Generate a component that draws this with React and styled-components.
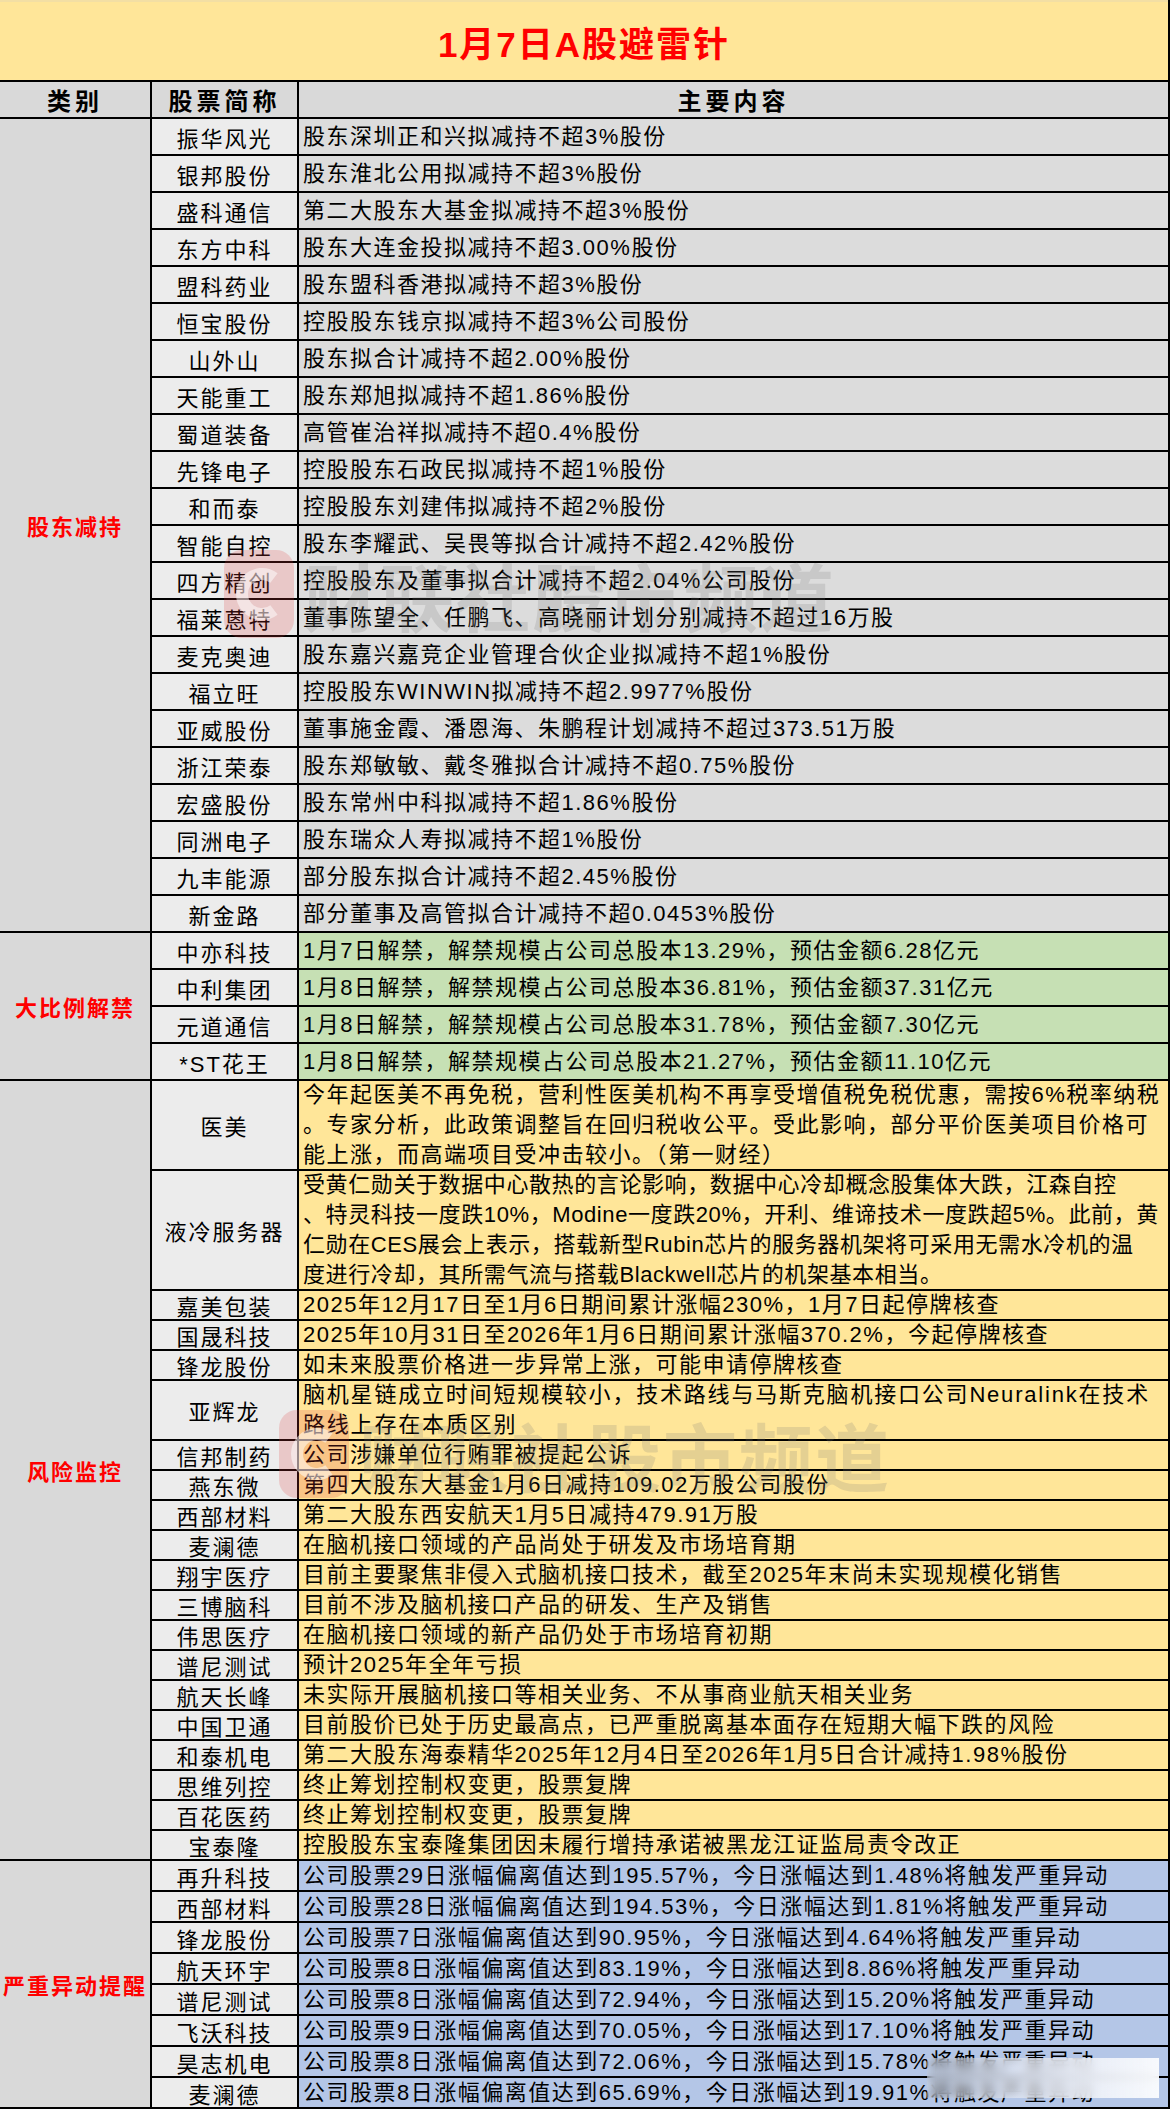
import styled, { createGlobalStyle } from "styled-components";

const GlobalStyle = createGlobalStyle`
  * { box-sizing: border-box; }
  body {
    margin: 0;
    background: #ffffff;
  }
`;

const LINE = "2px solid #000";
const FONT = `"Liberation Sans Narrow", "Liberation Sans", "Noto Sans CJK SC", sans-serif`;

const Sheet = styled.div`
  position: relative;
  width: 1170px;
  border-right: ${LINE};
  font-family: ${FONT};
  color: #000;
  overflow: hidden;
`;

const TitleBar = styled.div`
  height: 82px;
  background: #ffe699;
  border-top: 2px solid #f3dfa4;
  border-bottom: ${LINE};
  display: flex;
  align-items: center;
  justify-content: center;
  color: #ff0000;
  font-size: 35px;
  font-weight: 700;
  letter-spacing: 2px;
`;

const HeaderRow = styled.div`
  display: flex;
  height: 37px;
  background: #d9d9d9;
  border-bottom: ${LINE};
`;

const HeaderCell = styled.div`
  width: ${(p) => (p.$w ? `${p.$w}px` : "auto")};
  flex: ${(p) => (p.$w ? "none" : "1")};
  border-right: ${(p) => (p.$w ? LINE : "none")};
  display: flex;
  align-items: center;
  justify-content: center;
  font-size: 24px;
  font-weight: 700;
  letter-spacing: 4px;
`;

const Section = styled.div`
  display: flex;
`;

const Category = styled.div`
  width: 152px;
  flex: none;
  background: #d9d9d9;
  border-right: ${LINE};
  border-bottom: ${LINE};
  display: flex;
  align-items: center;
  justify-content: center;
  color: #ff0000;
  font-size: 22px;
  font-weight: 700;
  letter-spacing: 2px;
  white-space: nowrap;
`;

const Rows = styled.div`
  flex: 1;
  display: flex;
  flex-direction: column;
`;

const Row = styled.div`
  display: flex;
  height: ${(p) => p.$h}px;
  border-bottom: ${LINE};
`;

const Name = styled.div`
  width: 147px;
  flex: none;
  background: #ececec;
  border-right: ${LINE};
  display: flex;
  align-items: center;
  justify-content: center;
  font-size: 22px;
  letter-spacing: 2px;
  white-space: nowrap;
`;

const Content = styled.div`
  flex: 1;
  min-width: 0;
  background: ${(p) => p.$tone};
  padding-left: 4px;
  display: flex;
  flex-direction: column;
  justify-content: center;
  font-size: 22px;
  letter-spacing: ${(p) => p.$spacing}px;
  line-height: ${(p) => p.$lh}px;
  white-space: nowrap;
  overflow: hidden;
`;

const Watermark = styled.div`
  position: absolute;
  left: ${(p) => p.$x}px;
  top: ${(p) => p.$y}px;
  display: flex;
  align-items: center;
  gap: 8px;
  pointer-events: none;
  color: rgba(120, 120, 120, 0.2);
  font-family: "Noto Sans CJK SC", sans-serif;
  font-size: 74px;
  font-weight: 700;
  letter-spacing: 2px;
  white-space: nowrap;
`;

const Smudge = styled.div`
  position: absolute;
  left: 927px;
  top: 2058px;
  width: 232px;
  height: 40px;
  background: linear-gradient(
    to right,
    rgba(255, 255, 255, 0.25),
    rgba(240, 242, 248, 0.8) 60%,
    rgba(255, 255, 255, 0.9)
  );
  backdrop-filter: blur(4px);
`;

const Logo = () => (
  <svg width="74" height="92" viewBox="0 0 74 92">
    <rect x="2" y="2" width="70" height="88" rx="18" fill="rgba(225,60,60,0.2)" />
    <path
      d="M52 30 A20 20 0 1 0 52 62"
      fill="none"
      stroke="rgba(255,255,255,0.5)"
      strokeWidth="12"
    />
  </svg>
);

const GRAY = "#dcdcdc";
const GREEN = "#c6e0b4";
const YELLOW = "#ffe699";
const BLUE = "#b4c6e7";

const sections = [
  {
    title: "股东减持",
    tone: GRAY,
    rowH: 37,
    rows: [
      ["振华风光", ["股东深圳正和兴拟减持不超3%股份"]],
      ["银邦股份", ["股东淮北公用拟减持不超3%股份"]],
      ["盛科通信", ["第二大股东大基金拟减持不超3%股份"]],
      ["东方中科", ["股东大连金投拟减持不超3.00%股份"]],
      ["盟科药业", ["股东盟科香港拟减持不超3%股份"]],
      ["恒宝股份", ["控股股东钱京拟减持不超3%公司股份"]],
      ["山外山", ["股东拟合计减持不超2.00%股份"]],
      ["天能重工", ["股东郑旭拟减持不超1.86%股份"]],
      ["蜀道装备", ["高管崔治祥拟减持不超0.4%股份"]],
      ["先锋电子", ["控股股东石政民拟减持不超1%股份"]],
      ["和而泰", ["控股股东刘建伟拟减持不超2%股份"]],
      ["智能自控", ["股东李耀武、吴畏等拟合计减持不超2.42%股份"]],
      ["四方精创", ["控股股东及董事拟合计减持不超2.04%公司股份"]],
      ["福莱蒽特", ["董事陈望全、任鹏飞、高晓丽计划分别减持不超过16万股"]],
      ["麦克奥迪", ["股东嘉兴嘉竞企业管理合伙企业拟减持不超1%股份"]],
      ["福立旺", ["控股股东WINWIN拟减持不超2.9977%股份"]],
      ["亚威股份", ["董事施金霞、潘恩海、朱鹏程计划减持不超过373.51万股"]],
      ["浙江荣泰", ["股东郑敏敏、戴冬雅拟合计减持不超0.75%股份"]],
      ["宏盛股份", ["股东常州中科拟减持不超1.86%股份"]],
      ["同洲电子", ["股东瑞众人寿拟减持不超1%股份"]],
      ["九丰能源", ["部分股东拟合计减持不超2.45%股份"]],
      ["新金路", ["部分董事及高管拟合计减持不超0.0453%股份"]],
    ],
  },
  {
    title: "大比例解禁",
    tone: GREEN,
    rowH: 37,
    rows: [
      ["中亦科技", ["1月7日解禁，解禁规模占公司总股本13.29%，预估金额6.28亿元"]],
      ["中利集团", ["1月8日解禁，解禁规模占公司总股本36.81%，预估金额37.31亿元"]],
      ["元道通信", ["1月8日解禁，解禁规模占公司总股本31.78%，预估金额7.30亿元"]],
      ["*ST花王", ["1月8日解禁，解禁规模占公司总股本21.27%，预估金额11.10亿元"]],
    ],
  },
  {
    title: "风险监控",
    tone: YELLOW,
    rowH: 30,
    rows: [
      [
        "医美",
        [
          "今年起医美不再免税，营利性医美机构不再享受增值税免税优惠，需按6%税率纳税",
          "。专家分析，此政策调整旨在回归税收公平。受此影响，部分平价医美项目价格可",
          "能上涨，而高端项目受冲击较小。（第一财经）",
        ],
        1.5,
      ],
      [
        "液冷服务器",
        [
          "受黄仁勋关于数据中心散热的言论影响，数据中心冷却概念股集体大跌，江森自控",
          "、特灵科技一度跌10%，Modine一度跌20%，开利、维谛技术一度跌超5%。此前，黄",
          "仁勋在CES展会上表示，搭载新型Rubin芯片的服务器机架将可采用无需水冷机的温",
          "度进行冷却，其所需气流与搭载Blackwell芯片的机架基本相当。",
        ],
        0.6,
      ],
      ["嘉美包装", ["2025年12月17日至1月6日期间累计涨幅230%，1月7日起停牌核查"]],
      ["国晟科技", ["2025年10月31日至2026年1月6日期间累计涨幅370.2%，今起停牌核查"]],
      ["锋龙股份", ["如未来股票价格进一步异常上涨，可能申请停牌核查"]],
      [
        "亚辉龙",
        [
          "脑机星链成立时间短规模较小，技术路线与马斯克脑机接口公司Neuralink在技术",
          "路线上存在本质区别",
        ],
        1.8,
      ],
      ["信邦制药", ["公司涉嫌单位行贿罪被提起公诉"]],
      ["燕东微", ["第四大股东大基金1月6日减持109.02万股公司股份"]],
      ["西部材料", ["第二大股东西安航天1月5日减持479.91万股"]],
      ["麦澜德", ["在脑机接口领域的产品尚处于研发及市场培育期"]],
      ["翔宇医疗", ["目前主要聚焦非侵入式脑机接口技术，截至2025年末尚未实现规模化销售"]],
      ["三博脑科", ["目前不涉及脑机接口产品的研发、生产及销售"]],
      ["伟思医疗", ["在脑机接口领域的新产品仍处于市场培育初期"]],
      ["谱尼测试", ["预计2025年全年亏损"]],
      ["航天长峰", ["未实际开展脑机接口等相关业务、不从事商业航天相关业务"]],
      ["中国卫通", ["目前股价已处于历史最高点，已严重脱离基本面存在短期大幅下跌的风险"]],
      ["和泰机电", ["第二大股东海泰精华2025年12月4日至2026年1月5日合计减持1.98%股份"]],
      ["思维列控", ["终止筹划控制权变更，股票复牌"]],
      ["百花医药", ["终止筹划控制权变更，股票复牌"]],
      ["宝泰隆", ["控股股东宝泰隆集团因未履行增持承诺被黑龙江证监局责令改正"]],
    ],
  },
  {
    title: "严重异动提醒",
    tone: BLUE,
    rowH: 31,
    rows: [
      ["再升科技", ["公司股票29日涨幅偏离值达到195.57%，今日涨幅达到1.48%将触发严重异动"]],
      ["西部材料", ["公司股票28日涨幅偏离值达到194.53%，今日涨幅达到1.81%将触发严重异动"]],
      ["锋龙股份", ["公司股票7日涨幅偏离值达到90.95%，今日涨幅达到4.64%将触发严重异动"]],
      ["航天环宇", ["公司股票8日涨幅偏离值达到83.19%，今日涨幅达到8.86%将触发严重异动"]],
      ["谱尼测试", ["公司股票8日涨幅偏离值达到72.94%，今日涨幅达到15.20%将触发严重异动"]],
      ["飞沃科技", ["公司股票9日涨幅偏离值达到70.05%，今日涨幅达到17.10%将触发严重异动"]],
      ["昊志机电", ["公司股票8日涨幅偏离值达到72.06%，今日涨幅达到15.78%将触发严重异动"]],
      ["麦澜德", ["公司股票8日涨幅偏离值达到65.69%，今日涨幅达到19.91%将触发严重异动"]],
    ],
  },
];

const App = () => {
  return (
    <>
      <GlobalStyle />
      <Sheet>
        <TitleBar>1月7日A股避雷针</TitleBar>
        <HeaderRow>
          <HeaderCell $w={152}>类别</HeaderCell>
          <HeaderCell $w={147}>股票简称</HeaderCell>
          <HeaderCell>主要内容</HeaderCell>
        </HeaderRow>
        {sections.map((section) => (
          <Section key={section.title}>
            <Category>{section.title}</Category>
            <Rows>
              {section.rows.map(([name, lines, spacing]) => (
                <Row key={name + lines[0]} $h={section.rowH * lines.length}>
                  <Name>{name}</Name>
                  <Content
                    $tone={section.tone}
                    $lh={section.rowH}
                    $spacing={spacing || 1.5}
                  >
                    {lines.map((line) => (
                      <span key={line}>{line}</span>
                    ))}
                  </Content>
                </Row>
              ))}
            </Rows>
          </Section>
        ))}
        <Watermark $x={222} $y={540}>
          <Logo />
          <span>财联社股市频道</span>
        </Watermark>
        <Watermark $x={277} $y={1400}>
          <Logo />
          <span>财联社股市频道</span>
        </Watermark>
        <Smudge />
      </Sheet>
    </>
  );
};

export default App;
